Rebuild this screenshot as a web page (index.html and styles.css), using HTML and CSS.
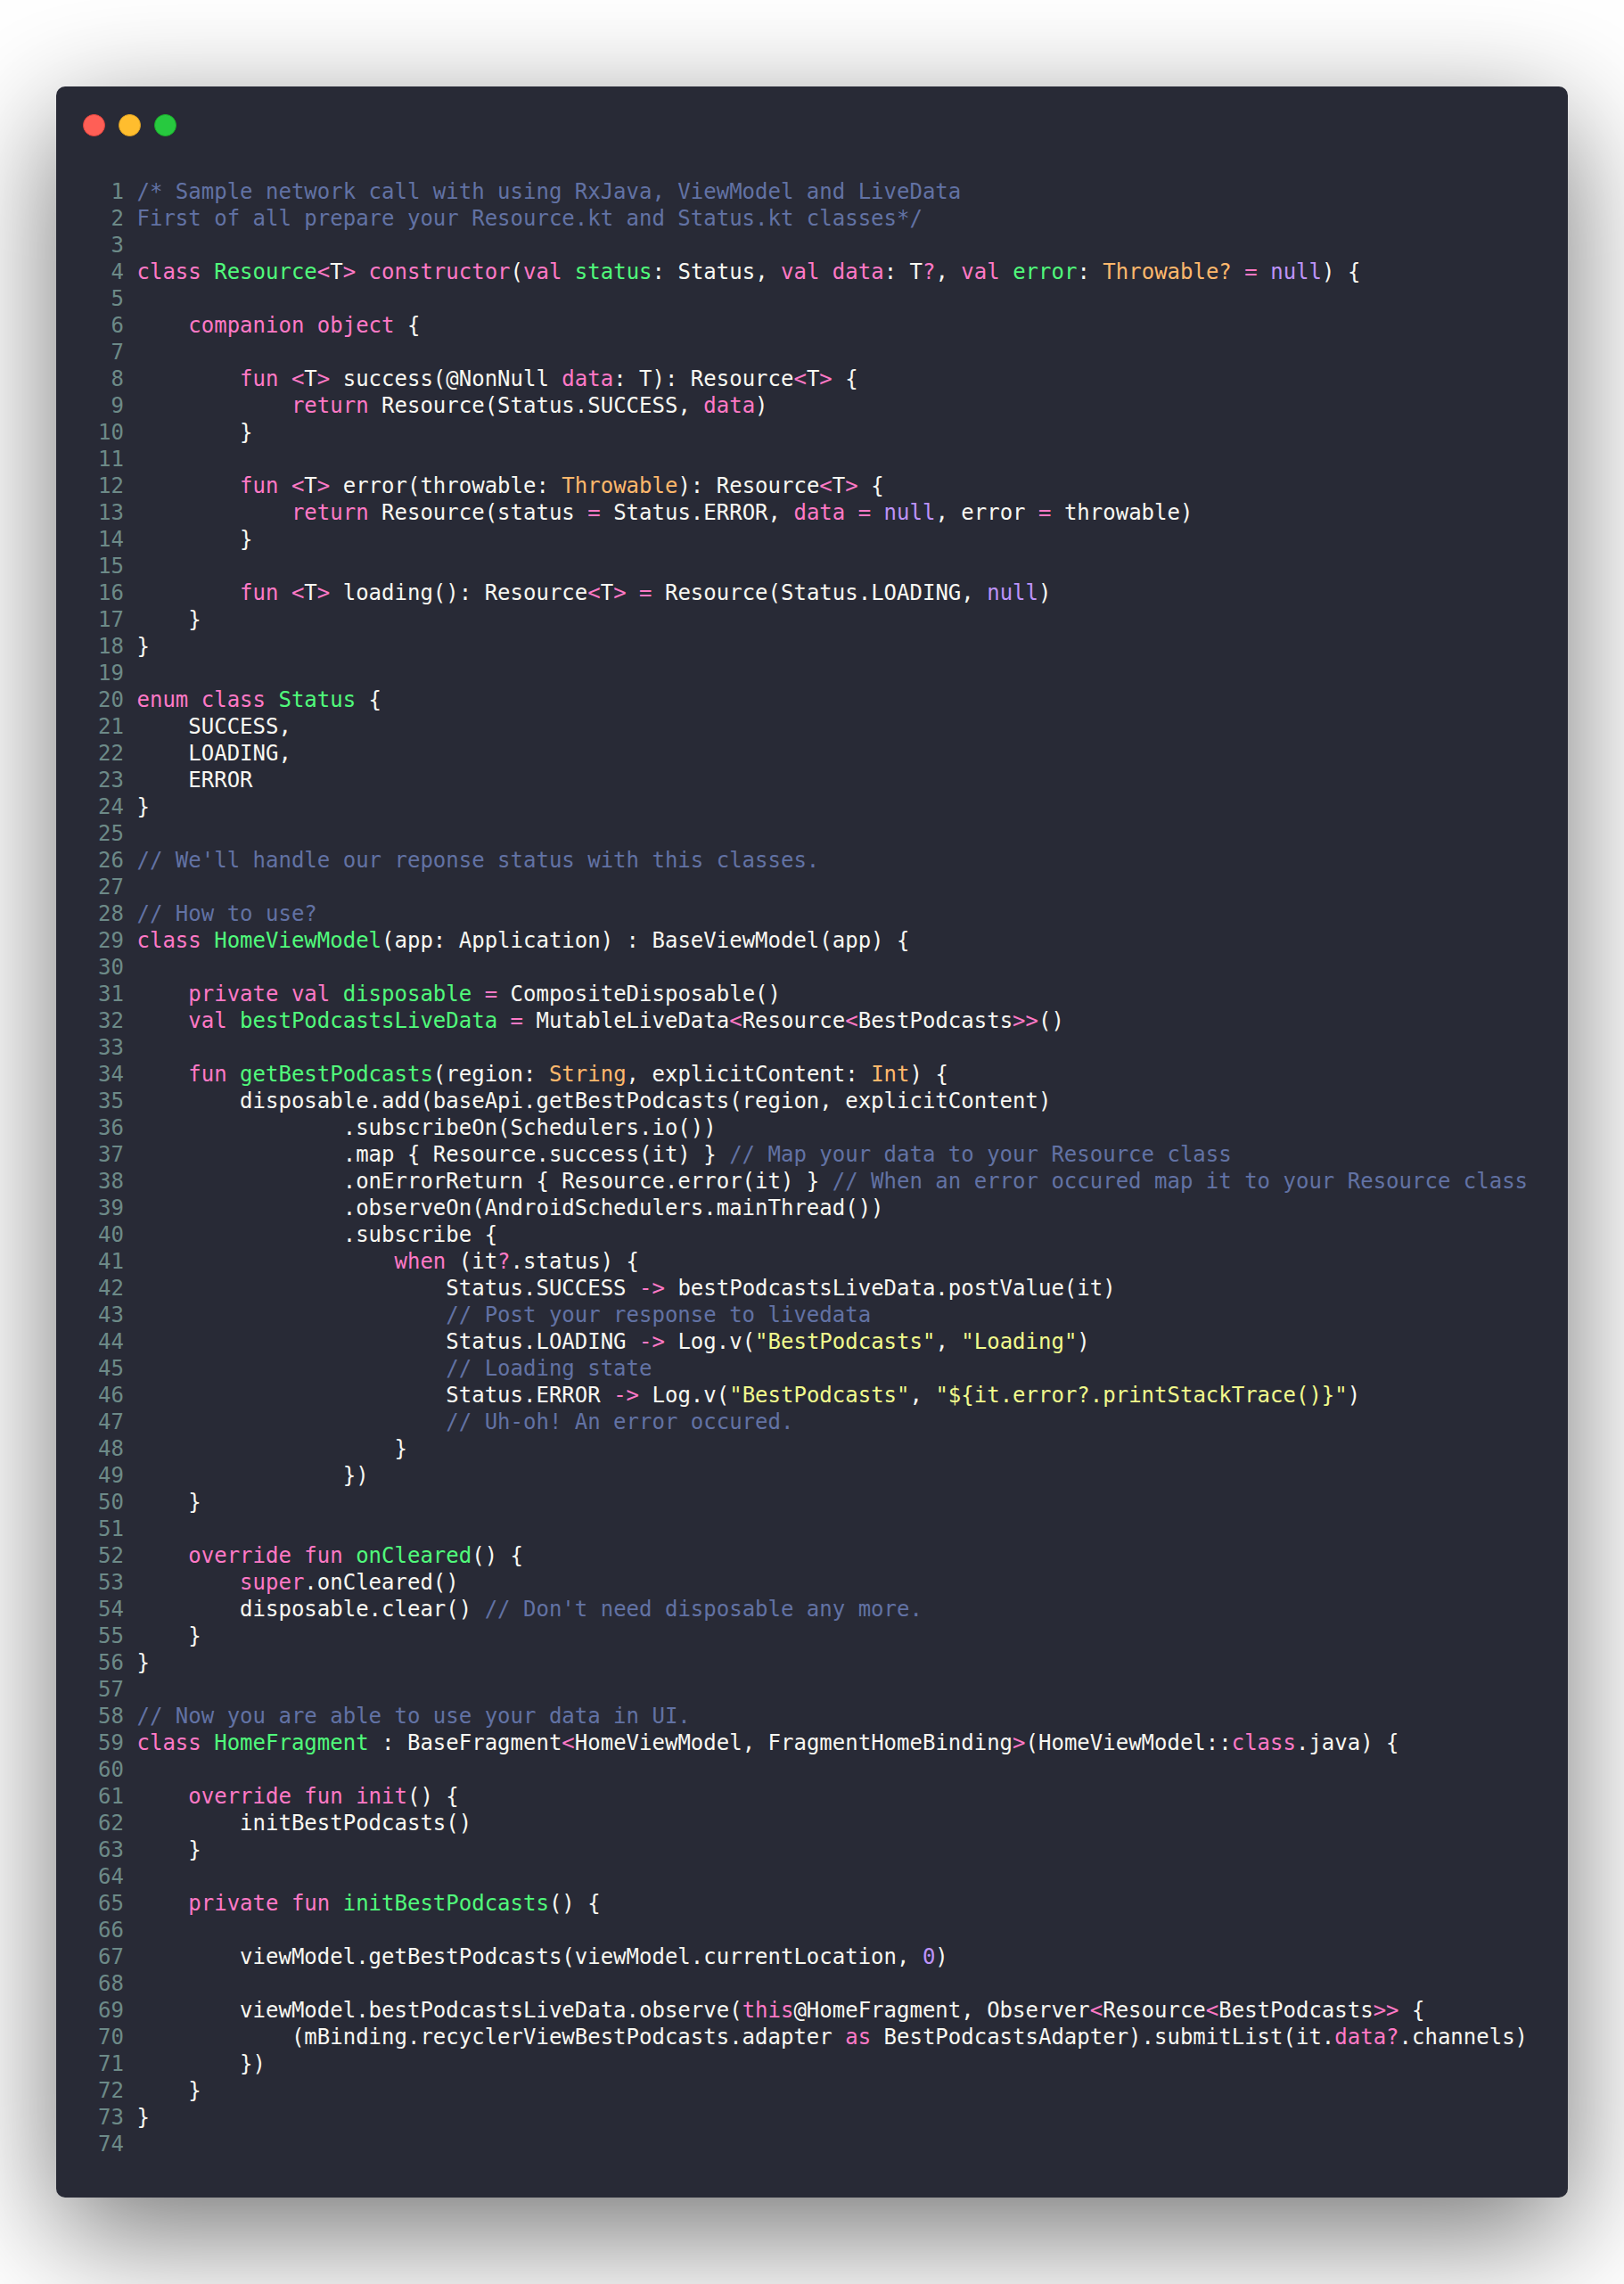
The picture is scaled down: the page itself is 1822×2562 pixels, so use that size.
FILE: index.html
```html
<!DOCTYPE html>
<html lang="en">
<head>
<meta charset="utf-8">
<title>Code snippet</title>
<link rel="stylesheet" href="styles.css">
</head>
<body>
<main class="window">
<div class="controls"><span class="dot red"></span><span class="dot yellow"></span><span class="dot green"></span></div>
<div class="editor">
<div class="row"><span class="num">1</span><code><i class="c">/* Sample network call with using RxJava, ViewModel and LiveData</i></code></div>
<div class="row"><span class="num">2</span><code><i class="c">First of all prepare your Resource.kt and Status.kt classes*/</i></code></div>
<div class="row"><span class="num">3</span><code></code></div>
<div class="row"><span class="num">4</span><code><i class="k">class</i> <i class="g">Resource</i><i class="k">&lt;</i>T<i class="k">&gt;</i> <i class="k">constructor</i>(<i class="k">val</i> <i class="g">status</i>: Status, <i class="k">val</i> <i class="k">data</i>: T<i class="k">?</i>, <i class="k">val</i> <i class="g">error</i>: <i class="o">Throwable?</i> <i class="k">=</i> <i class="p">null</i>) {</code></div>
<div class="row"><span class="num">5</span><code></code></div>
<div class="row"><span class="num">6</span><code>    <i class="k">companion object</i> {</code></div>
<div class="row"><span class="num">7</span><code></code></div>
<div class="row"><span class="num">8</span><code>        <i class="k">fun</i> <i class="k">&lt;</i>T<i class="k">&gt;</i> success(@NonNull <i class="k">data</i>: T): Resource<i class="k">&lt;</i>T<i class="k">&gt;</i> {</code></div>
<div class="row"><span class="num">9</span><code>            <i class="k">return</i> Resource(Status.SUCCESS, <i class="k">data</i>)</code></div>
<div class="row"><span class="num">10</span><code>        }</code></div>
<div class="row"><span class="num">11</span><code></code></div>
<div class="row"><span class="num">12</span><code>        <i class="k">fun</i> <i class="k">&lt;</i>T<i class="k">&gt;</i> error(throwable: <i class="o">Throwable</i>): Resource<i class="k">&lt;</i>T<i class="k">&gt;</i> {</code></div>
<div class="row"><span class="num">13</span><code>            <i class="k">return</i> Resource(status <i class="k">=</i> Status.ERROR, <i class="k">data</i> <i class="k">=</i> <i class="p">null</i>, error <i class="k">=</i> throwable)</code></div>
<div class="row"><span class="num">14</span><code>        }</code></div>
<div class="row"><span class="num">15</span><code></code></div>
<div class="row"><span class="num">16</span><code>        <i class="k">fun</i> <i class="k">&lt;</i>T<i class="k">&gt;</i> loading(): Resource<i class="k">&lt;</i>T<i class="k">&gt;</i> <i class="k">=</i> Resource(Status.LOADING, <i class="p">null</i>)</code></div>
<div class="row"><span class="num">17</span><code>    }</code></div>
<div class="row"><span class="num">18</span><code>}</code></div>
<div class="row"><span class="num">19</span><code></code></div>
<div class="row"><span class="num">20</span><code><i class="k">enum class</i> <i class="g">Status</i> {</code></div>
<div class="row"><span class="num">21</span><code>    SUCCESS,</code></div>
<div class="row"><span class="num">22</span><code>    LOADING,</code></div>
<div class="row"><span class="num">23</span><code>    ERROR</code></div>
<div class="row"><span class="num">24</span><code>}</code></div>
<div class="row"><span class="num">25</span><code></code></div>
<div class="row"><span class="num">26</span><code><i class="c">// We'll handle our reponse status with this classes.</i></code></div>
<div class="row"><span class="num">27</span><code></code></div>
<div class="row"><span class="num">28</span><code><i class="c">// How to use?</i></code></div>
<div class="row"><span class="num">29</span><code><i class="k">class</i> <i class="g">HomeViewModel</i>(app: Application) : BaseViewModel(app) {</code></div>
<div class="row"><span class="num">30</span><code></code></div>
<div class="row"><span class="num">31</span><code>    <i class="k">private val</i> <i class="g">disposable</i> <i class="k">=</i> CompositeDisposable()</code></div>
<div class="row"><span class="num">32</span><code>    <i class="k">val</i> <i class="g">bestPodcastsLiveData</i> <i class="k">=</i> MutableLiveData<i class="k">&lt;</i>Resource<i class="k">&lt;</i>BestPodcasts<i class="k">&gt;&gt;</i>()</code></div>
<div class="row"><span class="num">33</span><code></code></div>
<div class="row"><span class="num">34</span><code>    <i class="k">fun</i> <i class="g">getBestPodcasts</i>(region: <i class="o">String</i>, explicitContent: <i class="o">Int</i>) {</code></div>
<div class="row"><span class="num">35</span><code>        disposable.add(baseApi.getBestPodcasts(region, explicitContent)</code></div>
<div class="row"><span class="num">36</span><code>                .subscribeOn(Schedulers.io())</code></div>
<div class="row"><span class="num">37</span><code>                .map { Resource.success(it) } <i class="c">// Map your data to your Resource class</i></code></div>
<div class="row"><span class="num">38</span><code>                .onErrorReturn { Resource.error(it) } <i class="c">// When an error occured map it to your Resource class</i></code></div>
<div class="row"><span class="num">39</span><code>                .observeOn(AndroidSchedulers.mainThread())</code></div>
<div class="row"><span class="num">40</span><code>                .subscribe {</code></div>
<div class="row"><span class="num">41</span><code>                    <i class="k">when</i> (it<i class="k">?</i>.status) {</code></div>
<div class="row"><span class="num">42</span><code>                        Status.SUCCESS <i class="k">-&gt;</i> bestPodcastsLiveData.postValue(it)</code></div>
<div class="row"><span class="num">43</span><code>                        <i class="c">// Post your response to livedata</i></code></div>
<div class="row"><span class="num">44</span><code>                        Status.LOADING <i class="k">-&gt;</i> Log.v(<i class="s">"BestPodcasts"</i>, <i class="s">"Loading"</i>)</code></div>
<div class="row"><span class="num">45</span><code>                        <i class="c">// Loading state</i></code></div>
<div class="row"><span class="num">46</span><code>                        Status.ERROR <i class="k">-&gt;</i> Log.v(<i class="s">"BestPodcasts"</i>, <i class="s">"${it.error?.printStackTrace()}"</i>)</code></div>
<div class="row"><span class="num">47</span><code>                        <i class="c">// Uh-oh! An error occured.</i></code></div>
<div class="row"><span class="num">48</span><code>                    }</code></div>
<div class="row"><span class="num">49</span><code>                })</code></div>
<div class="row"><span class="num">50</span><code>    }</code></div>
<div class="row"><span class="num">51</span><code></code></div>
<div class="row"><span class="num">52</span><code>    <i class="k">override fun</i> <i class="g">onCleared</i>() {</code></div>
<div class="row"><span class="num">53</span><code>        <i class="k">super</i>.onCleared()</code></div>
<div class="row"><span class="num">54</span><code>        disposable.clear() <i class="c">// Don't need disposable any more.</i></code></div>
<div class="row"><span class="num">55</span><code>    }</code></div>
<div class="row"><span class="num">56</span><code>}</code></div>
<div class="row"><span class="num">57</span><code></code></div>
<div class="row"><span class="num">58</span><code><i class="c">// Now you are able to use your data in UI.</i></code></div>
<div class="row"><span class="num">59</span><code><i class="k">class</i> <i class="g">HomeFragment</i> : BaseFragment<i class="k">&lt;</i>HomeViewModel, FragmentHomeBinding<i class="k">&gt;</i>(HomeViewModel::<i class="k">class</i>.java) {</code></div>
<div class="row"><span class="num">60</span><code></code></div>
<div class="row"><span class="num">61</span><code>    <i class="k">override fun init</i>() {</code></div>
<div class="row"><span class="num">62</span><code>        initBestPodcasts()</code></div>
<div class="row"><span class="num">63</span><code>    }</code></div>
<div class="row"><span class="num">64</span><code></code></div>
<div class="row"><span class="num">65</span><code>    <i class="k">private fun</i> <i class="g">initBestPodcasts</i>() {</code></div>
<div class="row"><span class="num">66</span><code></code></div>
<div class="row"><span class="num">67</span><code>        viewModel.getBestPodcasts(viewModel.currentLocation, <i class="p">0</i>)</code></div>
<div class="row"><span class="num">68</span><code></code></div>
<div class="row"><span class="num">69</span><code>        viewModel.bestPodcastsLiveData.observe(<i class="k">this</i>@HomeFragment, Observer<i class="k">&lt;</i>Resource<i class="k">&lt;</i>BestPodcasts<i class="k">&gt;&gt;</i> {</code></div>
<div class="row"><span class="num">70</span><code>            (mBinding.recyclerViewBestPodcasts.adapter <i class="k">as</i> BestPodcastsAdapter).submitList(it.<i class="k">data?</i>.channels)</code></div>
<div class="row"><span class="num">71</span><code>        })</code></div>
<div class="row"><span class="num">72</span><code>    }</code></div>
<div class="row"><span class="num">73</span><code>}</code></div>
<div class="row"><span class="num">74</span><code></code></div>
</div>
</main>
</body>
</html>
```

FILE: styles.css
```css
html, body {
  margin: 0;
  background: #fff;
}

body {
  padding: 97px 63px 97px;
  overflow: hidden;
}

.window {
  box-sizing: border-box;
  width: 1696px;
  height: 2368px;
  padding: 31px 30px 0;
  background: #282a36;
  border-radius: 10px;
  box-shadow: 0 40px 136px rgba(0, 0, 0, 0.55);
}

.controls {
  display: flex;
  gap: 15px;
}

.dot {
  box-sizing: border-box;
  width: 25px;
  height: 25px;
  border-radius: 50%;
  border: 1px solid;
}

.red { background: #ff5f56; border-color: #e0443e; }
.yellow { background: #ffbd2e; border-color: #dea123; }
.green { background: #27c93f; border-color: #1aab29; }

.editor {
  margin-top: 47px;
  font: 24px/30px "DejaVu Sans Mono", monospace;
  color: #f8f8f2;
}

.row {
  display: flex;
  gap: 14.5px;
  height: 30px;
  white-space: pre;
}

.num {
  flex: none;
  width: 46px;
  text-align: right;
  color: #6d8a88;
}

code {
  font: inherit;
}

i { font-style: normal; }
.k { color: #ff79c6; }
.g { color: #50fa7b; }
.o { color: #ffb86c; }
.p { color: #bd93f9; }
.s { color: #f1fa8c; }
.c { color: #6272a4; }
```
